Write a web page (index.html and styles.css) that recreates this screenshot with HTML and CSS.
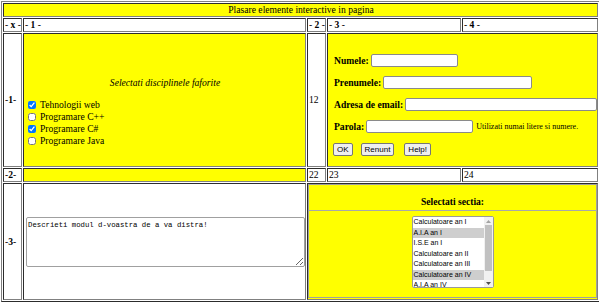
FILE: index.html
```html
<!DOCTYPE html>
<html lang="ro">
<head>
    <meta charset="UTF-8">
    <title>Plasare elemente interactive in pagina</title>
    <link rel="stylesheet" href="styles.css">
</head>
<body>

    <table class="layout">
        <colgroup>
            <col class="col-label">
            <col class="col-main">
            <col class="col-label">
            <col class="col-mid">
            <col class="col-right">
        </colgroup>
        <tr class="row-line">
            <td colspan="5" class="yellow center">Plasare elemente interactive in pagina</td>
        </tr>
        <tr class="row-line">
            <td>- <b>x</b> -</td>
            <td>- <b>1</b> -</td>
            <td>- <b>2</b> -</td>
            <td>- <b>3</b> -</td>
            <td>- <b>4</b> -</td>
        </tr>
        <tr class="row-form">
            <td>-<b>1</b>-</td>
            <td class="yellow disc-cell">
                <p class="disc-title">Selectati disciplinele faforite</p>
                <label class="check"><input type="checkbox" checked>Tehnologii web</label>
                <label class="check"><input type="checkbox">Programare C++</label>
                <label class="check"><input type="checkbox" checked>Programare C#</label>
                <label class="check"><input type="checkbox">Programare Java</label>
            </td>
            <td>12</td>
            <td colspan="2" class="yellow form-cell">
                <form class="user-form">
                    <div class="field"><b>Numele:</b><input type="text" class="in-nume"></div>
                    <div class="field"><b>Prenumele:</b><input type="text" class="in-prenume"></div>
                    <div class="field"><b>Adresa de email:</b><input type="text" class="in-email"></div>
                    <div class="field"><b>Parola:</b><input type="password" class="in-parola"><small>Utilizati numai litere si numere.</small></div>
                    <div class="buttons">
                        <button type="submit" class="btn-ok">OK</button>
                        <button type="reset" class="btn-renunt">Renunt</button>
                        <button type="button">Help!</button>
                    </div>
                </form>
            </td>
        </tr>
        <tr class="row-line">
            <td>-<b>2</b>-</td>
            <td class="yellow"></td>
            <td>22</td>
            <td>23</td>
            <td>24</td>
        </tr>
        <tr class="row-bottom">
            <td>-<b>3</b>-</td>
            <td class="text-cell">
                <textarea class="story" spellcheck="false">Descrieti modul d-voastra de a va distra!</textarea>
            </td>
            <td colspan="3" class="yellow section-cell">
                <table class="section">
                    <tr class="section-head">
                        <th class="section-title">Selectati sectia:</th>
                    </tr>
                    <tr class="section-body">
                        <td class="section-list">
                            <div class="listbox">
                                <select class="sections" multiple size="7">
                                    <option>Calculatoare an I</option>
                                    <option selected>A.I.A an I</option>
                                    <option>I.S.E an I</option>
                                    <option>Calculatoare an II</option>
                                    <option>Calculatoare an III</option>
                                    <option selected>Calculatoare an IV</option>
                                    <option>A.I.A an IV</option>
                                    <option>I.S.E an IV</option>
                                </select>
                                <div class="scrollbar">
                                    <span class="sb-arrow">
                                        <svg width="5" height="3" viewBox="0 0 5 3"><path d="M0 3L2.5 0L5 3z" fill="#a3a3a3"/></svg>
                                    </span>
                                    <span class="sb-track"><span class="sb-thumb"></span></span>
                                    <span class="sb-arrow">
                                        <svg width="5" height="3" viewBox="0 0 5 3"><path d="M0 0L2.5 3L5 0z" fill="#505050"/></svg>
                                    </span>
                                </div>
                            </div>
                        </td>
                    </tr>
                </table>
            </td>
        </tr>
    </table>

</body>
</html>
```

FILE: styles.css
```css
body {
    margin: 1px;
    font-family: "Liberation Serif", "Times New Roman", serif;
    font-size: 9.6px;
    line-height: 12px;
    color: #000;
    background: #fff;
}

.layout {
    width: 599px;
    table-layout: fixed;
    border: 1px outset #808080;
    border-spacing: 1px;
}

.layout td {
    box-sizing: border-box;
    padding: 0 0 0 1px;
    border: 1px inset #808080;
    vertical-align: middle;
    white-space: nowrap;
    overflow: hidden;
}

.col-label { width: 19px; }
.col-main { width: 283px; }
.col-mid { width: 134px; }
.col-right { width: 136px; }

.row-line { height: 14px; }
.row-form { height: 134px; }
.row-bottom { height: 117px; }

.yellow { background-color: #ffff00; }
.center { text-align: center; }

/* discipline */
.layout .disc-cell {
    vertical-align: top;
    padding-top: 43px;
}

.disc-title {
    margin: 0 0 10px;
    text-align: center;
    font-style: italic;
}

.check {
    display: flex;
    align-items: center;
    height: 12px;
}

.check input {
    width: 8px;
    height: 8px;
    margin: 0 4px 0 3px;
}

/* form */
.layout .form-cell {
    vertical-align: top;
}

.user-form {
    margin: 20px 0 0 5px;
}

.field {
    display: flex;
    align-items: center;
    height: 13px;
    margin-bottom: 9px;
}

.field b {
    margin-right: 2px;
}

.field input {
    box-sizing: border-box;
    height: 13px;
    padding: 0 2px;
    border: 1px solid #8a8a8a;
    border-radius: 2px;
    background: #fff;
    font-size: 8px;
}

.in-nume { width: 87px; }
.in-prenume { width: 149px; }
.in-email { width: 192px; }
.in-parola { width: 107px; }

.field small {
    margin-left: 3px;
    font-size: 8px;
}

.buttons {
    display: flex;
    height: 13px;
    margin-top: 10px;
    margin-left: -1px;
}

.buttons button {
    height: 13px;
    padding: 0 3px;
    border: 1px solid #767676;
    border-radius: 2px;
    background: #efefef;
    font-family: "Liberation Sans", Arial, sans-serif;
    font-size: 8px;
    line-height: 11px;
    color: #000;
}

.btn-ok { margin-right: 8px; }
.btn-renunt { margin-right: 10px; }

/* textarea */
.layout .text-cell {
    padding: 0 1px 0 2px;
}

.story {
    display: block;
    box-sizing: border-box;
    width: 279px;
    height: 50px;
    margin: 0;
    padding: 3px 1px;
    border: 1px solid #a0a0a0;
    border-radius: 2px;
    font-family: "Liberation Mono", "Courier New", monospace;
    font-size: 7.3px;
    line-height: 9px;
}

/* sectii */
.layout .section-cell {
    padding: 0;
    vertical-align: top;
}

.section {
    width: 100%;
    border: 1px outset #a0a0a0;
    border-collapse: collapse;
}

.section-head { height: 26px; }
.section-body { height: 87px; }

.section-title {
    box-sizing: border-box;
    padding: 8px 0 0;
    border-bottom: 1px solid #a8a8a8;
    font-size: 9.6px;
    text-align: center;
    vertical-align: middle;
}

.layout .section-list {
    padding: 5px 0 0;
    border: none;
    text-align: center;
    vertical-align: top;
}

.listbox {
    display: inline-flex;
    box-sizing: border-box;
    width: 82px;
    height: 72px;
    border: 1px solid #9a9a9a;
    border-radius: 2px;
    background: #fff;
    text-align: left;
    vertical-align: top;
}

.sections {
    flex: 1;
    min-width: 0;
    height: 70px;
    margin: 0;
    padding: 0;
    border: none;
    outline: none;
    overflow: hidden;
    background: #fff;
    font-family: "Liberation Sans", Arial, sans-serif;
    font-size: 7px;
}

.sections option {
    padding: 1px 1px 1.2px;
}

.sections option:checked {
    background: linear-gradient(#cecece, #cecece);
    color: #000;
}

.scrollbar {
    display: flex;
    flex-direction: column;
    width: 9px;
    background: #f1f1f1;
}

.sb-arrow {
    display: flex;
    align-items: center;
    justify-content: center;
    height: 8px;
}

.sb-track {
    flex: 1;
}

.sb-thumb {
    display: block;
    height: 46px;
    margin: 0 1px;
    background: #c1c1c1;
}
```
